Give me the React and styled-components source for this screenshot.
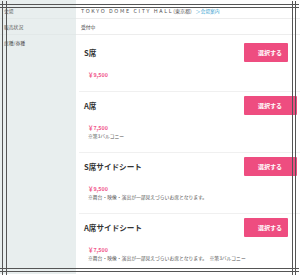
import React from "react";
import styled, { createGlobalStyle } from "styled-components";

const GlobalStyle = createGlobalStyle`
  html, body {
    margin: 0;
    padding: 0;
    background: #fff;
  }
  body {
    width: 300px;
    height: 276px;
    overflow: hidden;
    font-family: "Noto Sans CJK JP", "Liberation Sans", sans-serif;
  }
`;

const Page = styled.div`
  position: relative;
  width: 300px;
  height: 276px;
  overflow: hidden;
`;

const Table = styled.div`
  display: grid;
  grid-template-columns: 76px 1fr;
  grid-template-rows: 19px 16px 1fr;
  height: 272px;
`;

const Label = styled.div`
  background: #e8eeee;
  border-bottom: ${(p) => (p.last ? "none" : "1px solid #e2e8e8")};
  padding: ${(p) => (p.top ? "5px 0 0 4px" : p.first ? "3px 0 0 4px" : "0 0 0 4px")};
  display: flex;
  align-items: ${(p) => (p.top ? "flex-start" : "center")};
  font-size: 4.8px;
  line-height: 6px;
  color: #555;
`;

const Cell = styled.div`
  border-bottom: 1px solid #ededed;
  padding: ${(p) => (p.first ? "3px 0 0 5px" : "0 0 0 5px")};
  display: flex;
  align-items: center;
  font-size: 4.8px;
  color: #444;
`;

const Venue = styled.span`
  letter-spacing: 1.6px;
  font-size: 5.4px;
  color: #555;
`;

const Pref = styled.span`
  font-size: 5px;
  color: #555;
  margin-right: 4px;
`;

const VenueLink = styled.span`
  font-size: 4.8px;
  color: #3a9fd0;
`;

const SeatList = styled.div`
  padding-top: 4px;
`;

const Card = styled.div`
  margin-left: 3px;
  padding: 4px 3px 12px 0;
  border-bottom: ${(p) => (p.last ? "none" : "1px solid #f0f0f0")};
`;

const CardHead = styled.div`
  display: flex;
  align-items: center;
  justify-content: space-between;
  height: 19px;
`;

const SeatName = styled.div`
  padding-left: 5px;
  font-size: 7.6px;
  font-weight: 700;
  color: #333;
`;

const SelectButton = styled.button`
  width: ${(p) => (p.short ? "44px" : "53px")};
  margin-right: ${(p) => (p.short ? "9px" : "0")};
  height: 19px;
  border: none;
  border-radius: 1px;
  background: #ee4d80;
  color: #fff;
  font-family: "Noto Sans CJK JP", sans-serif;
  font-size: 6px;
  font-weight: 700;
  text-align: left;
  padding: 0 0 0 14px;
  cursor: pointer;
`;

const Price = styled.div`
  margin-top: 9px;
  padding-left: 9px;
  font-size: 5.4px;
  line-height: 8px;
  font-weight: 700;
  color: #f0558a;
`;

const Note = styled.div`
  padding-left: 9px;
  font-size: 4.8px;
  line-height: 8px;
  color: #555;
  white-space: pre;
`;

const Frame = styled.svg`
  position: absolute;
  left: 0;
  top: 0;
  pointer-events: none;
`;

const seats = [
  { name: "S席", price: "￥9,500", note: null, short: true },
  { name: "A席", price: "￥7,500", note: "※第3バルコニー" },
  { name: "S席サイドシート", price: "￥9,500", note: "※舞台・映像・演出が一部見えづらいお席となります。" },
  {
    name: "A席サイドシート",
    price: "￥7,500",
    note: "※舞台・映像・演出が一部見えづらいお席となります。　※第3バルコニー",
    short: true,
  },
];

const FrameLines = () => (
  <Frame width="300" height="276" viewBox="0 0 300 276">
    <g stroke="#555" strokeWidth="1" fill="none">
      <line x1="2.5" y1="1" x2="2.5" y2="275" />
      <line x1="6.5" y1="1" x2="6.5" y2="275" />
      <line x1="292.5" y1="1" x2="292.5" y2="275" />
      <line x1="295.5" y1="1" x2="295.5" y2="275" />
      <line x1="0" y1="4.5" x2="299" y2="4.5" />
      <line x1="0" y1="7.5" x2="299" y2="7.5" />
      <line x1="0" y1="268.5" x2="299" y2="268.5" />
      <line x1="0" y1="271.5" x2="299" y2="271.5" />
    </g>
  </Frame>
);

export default function App() {
  return (
    <Page>
      <GlobalStyle />
      <Table>
        <Label first>会場</Label>
        <Cell first>
          <Venue>TOKYO DOME CITY HALL</Venue>
          <Pref>(東京都)</Pref>
          <VenueLink>＞会場案内</VenueLink>
        </Cell>
        <Label>販売状況</Label>
        <Cell>受付中</Cell>
        <Label top last>席種/券種</Label>
        <SeatList>
          {seats.map((s, i) => (
            <Card key={s.name} last={i === seats.length - 1}>
              <CardHead>
                <SeatName>{s.name}</SeatName>
                <SelectButton short={s.short}>選択する</SelectButton>
              </CardHead>
              <Price>{s.price}</Price>
              {s.note && <Note>{s.note}</Note>}
            </Card>
          ))}
        </SeatList>
      </Table>
      <FrameLines />
    </Page>
  );
}
